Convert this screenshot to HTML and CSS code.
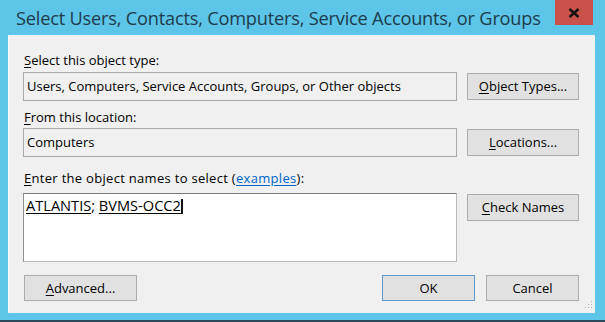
FILE: index.html
```html
<!DOCTYPE html>
<html>
<head>
<meta charset="utf-8">
<link rel="stylesheet" href="styles.css">
</head>
<body>
<div class="window">
  <div class="titlebar">
    <div class="title">Select Users, Contacts, Computers, Service Accounts, or Groups</div>
    <div class="close"><svg width="12" height="10" viewBox="0 0 12 10"><path d="M1.5 1 L10.5 9 M10.5 1 L1.5 9" stroke="#111" stroke-width="2.4" fill="none"/></svg></div>
  </div>
  <div class="client">
    <div class="label label-first"><u>S</u>elect this object type:</div>
    <div class="row">
      <div class="field">Users, Computers, Service Accounts, Groups, or Other objects</div>
      <div class="btn side"><u>O</u>bject Types...</div>
    </div>
    <div class="label label-second"><u>F</u>rom this location:</div>
    <div class="row">
      <div class="field">Computers</div>
      <div class="btn side"><u>L</u>ocations...</div>
    </div>
    <div class="label label-third"><u>E</u>nter the object names to select (<span class="link">examples</span>):</div>
    <div class="row">
      <div class="textarea"><span class="name">ATLANTIS</span>; <span class="name">BVMS-OCC2</span><span class="caret"></span></div>
      <div class="btn side"><u>C</u>heck Names</div>
    </div>
    <div class="footer">
      <div class="btn advanced"><u>A</u>dvanced...</div>
      <div class="actions">
        <div class="btn small default">OK</div>
        <div class="btn small">Cancel</div>
      </div>
    </div>
    <svg class="grip" width="10" height="10" viewBox="0 0 10 10">
      <rect x="8" y="0" width="1" height="1" fill="#b8b8b8"/>
      <rect x="8" y="3" width="1" height="1" fill="#b8b8b8"/>
      <rect x="5" y="3" width="1" height="1" fill="#b8b8b8"/>
      <rect x="8" y="6" width="1" height="1" fill="#b8b8b8"/>
      <rect x="5" y="6" width="1" height="1" fill="#b8b8b8"/>
      <rect x="2" y="6" width="1" height="1" fill="#b8b8b8"/>
    </svg>
  </div>
</div>
</body>
</html>
```
FILE: styles.css
```css
html, body {
  margin: 0;
  padding: 0;
}
body {
  width: 605px;
  height: 322px;
  overflow: hidden;
  background: #5cc5e8;
}
.window {
  width: 605px;
  height: 322px;
  box-sizing: border-box;
  background: #5cc5e8;
  border-bottom: 2px solid #27495a;
  display: flex;
  flex-direction: column;
}
.titlebar {
  height: 35px;
  display: flex;
  justify-content: space-between;
  align-items: flex-start;
}
.title {
  padding-left: 16px;
  line-height: 36px;
  font-family: "Open Sans", sans-serif;
  font-size: 18.2px;
  color: #1f3c4c;
  letter-spacing: -0.2px;
  white-space: nowrap;
}
.close {
  width: 38px;
  height: 25px;
  margin-right: 12px;
  background: #c9524b;
  display: flex;
  align-items: center;
  justify-content: center;
  flex-shrink: 0;
}
.client {
  position: relative;
  margin: 0 10px 0 8px;
  height: 278px;
  box-sizing: border-box;
  background: #f0f0f0;
  border-left: 1px solid #fafafa;
  padding: 17px 16px 0 14px;
  font-family: "Open Sans", sans-serif;
  font-size: 13px;
  color: #000;
}
.label {
  line-height: 16px;
  height: 16px;
  white-space: nowrap;
}
.label-first { margin-left: 1px; margin-bottom: 4px; }
.label-second { margin-left: 1px; margin-top: 8px; margin-bottom: 3px; }
.label-third { margin-left: 1px; margin-top: 13px; margin-bottom: 7px; letter-spacing: 0.3px; }
u { text-decoration: underline; text-underline-offset: 2px; }
.link {
  color: #0066cc;
  text-decoration: underline;
  text-underline-offset: 2px;
}
.row {
  display: flex;
  gap: 10px;
  align-items: flex-start;
}
.field {
  width: 434px;
  height: 29px;
  box-sizing: border-box;
  border: 1px solid #a9a9a9;
  background: #f0f0f0;
  padding-left: 3px;
  line-height: 27px;
  white-space: nowrap;
}
.textarea {
  width: 434px;
  height: 69px;
  box-sizing: border-box;
  border: 1px solid #b9b9b9;
  border-top-color: #7a7a7a;
  border-left-color: #8e8e8e;
  background: #fff;
  padding: 3px 0 0 2px;
  line-height: 16px;
  font-size: 14.6px;
  white-space: nowrap;
}
.name {
  text-decoration: underline;
  text-underline-offset: 2px;
}
.caret {
  display: inline-block;
  width: 2px;
  height: 15px;
  background: #111;
  vertical-align: -3px;
}
.btn {
  box-sizing: border-box;
  background: #e1e1e1;
  border: 1px solid #adadad;
  text-align: center;
  white-space: nowrap;
}
.side {
  width: 112px;
  height: 27px;
  line-height: 25px;
  margin-top: 1px;
}
.footer {
  margin-top: 13px;
  display: flex;
  justify-content: space-between;
  align-items: flex-start;
}
.advanced {
  width: 113px;
  height: 26px;
  line-height: 24px;
  margin-left: 1px;
}
.actions {
  display: flex;
  gap: 11px;
}
.small {
  width: 93px;
  height: 26px;
  line-height: 24px;
}
.default {
  border-color: #5f97c8;
}
.grip {
  position: absolute;
  right: 2px;
  bottom: 2px;
}
```
